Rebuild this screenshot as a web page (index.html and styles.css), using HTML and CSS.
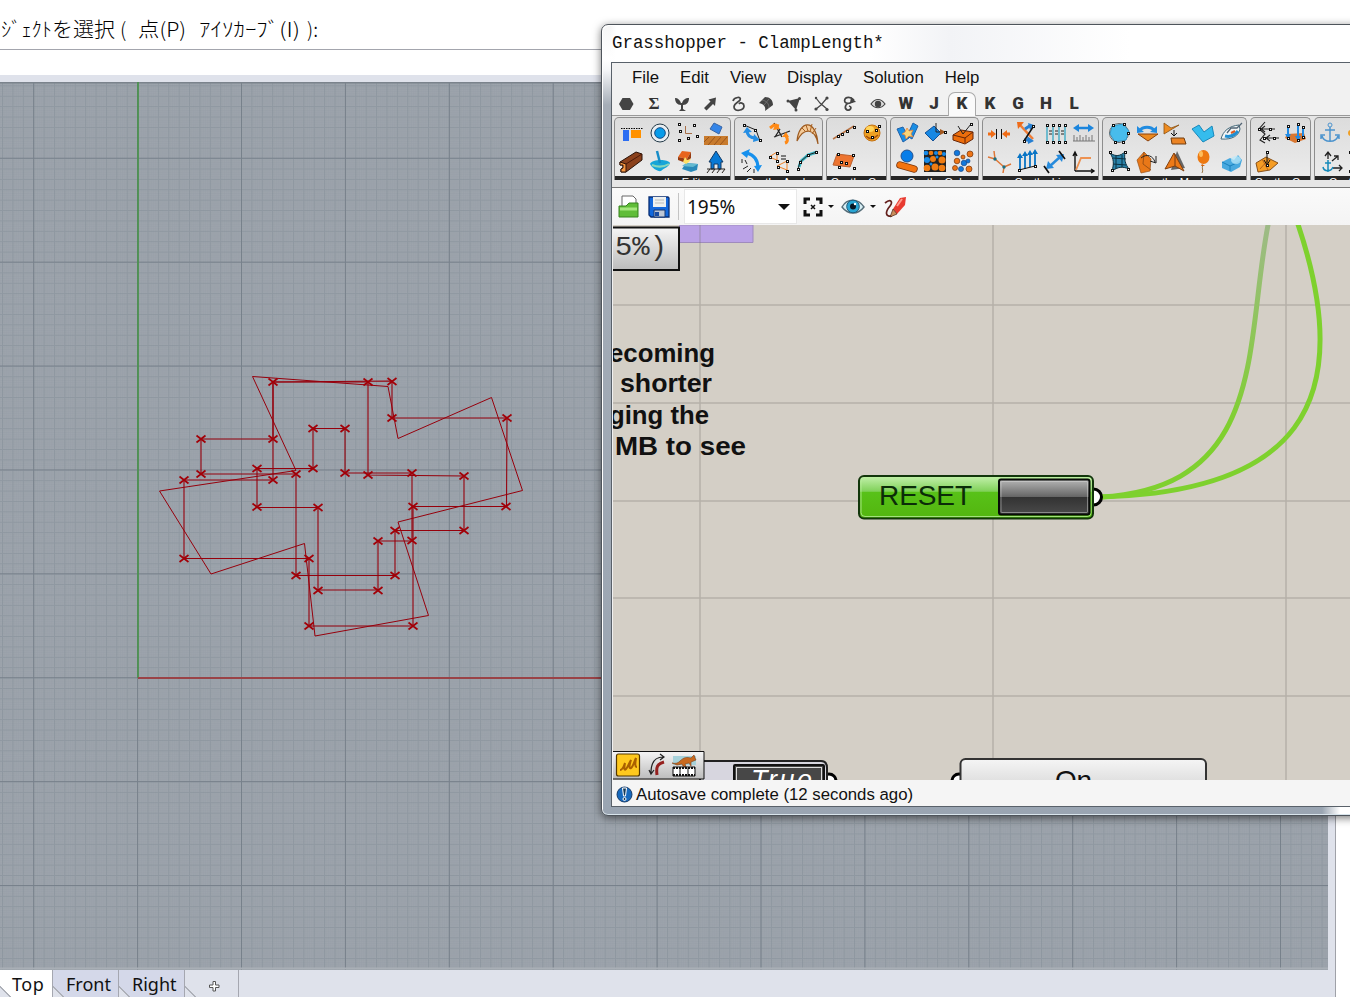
FILE: index.html
```html
<!DOCTYPE html>
<html lang="ja">
<head>
<meta charset="utf-8">
<title>Grasshopper - ClampLength</title>
<link rel="stylesheet" href="styles.css">
</head>
<body>
<div class="app">
  <header class="command">
    <svg width="340" height="49">
      <text x="1" y="37" textLength="51" lengthAdjust="spacingAndGlyphs">ｼﾞｪｸﾄ</text>
      <text x="52" y="37" textLength="63" lengthAdjust="spacingAndGlyphs">を選択</text>
      <text x="120" y="37">(</text>
      <text x="138" y="37" textLength="48" lengthAdjust="spacingAndGlyphs">点(P)</text>
      <text x="199" y="37" textLength="101" lengthAdjust="spacingAndGlyphs">ｱｲｿｶｰﾌﾞ(I)</text>
      <text x="307" y="37" textLength="11" lengthAdjust="spacingAndGlyphs">):</text>
    </svg>
  </header>
  <div class="workspace">
    <svg class="viewport" width="1328" height="888" viewBox="0 82 1328 888">
      <defs>
        <pattern id="fine" x="137.1" y="677.6" width="10.39" height="10.39" patternUnits="userSpaceOnUse">
          <path d="M2.1 0v10.4M4.2 0v10.4M6.2 0v10.4M8.3 0v10.4M0 2.1h10.4M0 4.2h10.4M0 6.2h10.4M0 8.3h10.4" stroke="#858f9a" stroke-width=".4" opacity=".35"/>
          <path d="M.5 0v10.4M0 .5h10.4" stroke="#7c8690" opacity=".42"/>
        </pattern>
        <pattern id="major" x="137.1" y="677.2" width="103.9" height="103.9" patternUnits="userSpaceOnUse">
          <path d="M.5 0v104M0 .5h104" stroke="#737c87" stroke-width="1" opacity=".85"/>
        </pattern>
        <path id="x" d="M-4.5-3.5L4.5 3.5M-4.5 3.5L4.5-3.5" stroke="#a20008" stroke-width="1.7"/>
      </defs>
      <rect y="82" width="1328" height="888" fill="#9da4ac"/>
      <rect y="82" width="1328" height="888" fill="url(#fine)"/>
      <rect y="82" width="1328" height="888" fill="url(#major)"/>
      <path d="M0 82.5H1328" stroke="#7b838c" stroke-width="2"/>
      <path d="M0 968.5H1328" stroke="#a9afb6" stroke-width="2"/>
      <path d="M138 82V678" stroke="#4c9150" stroke-width="1.8"/>
      <path d="M138 678H620" stroke="#9a4347" stroke-width="1.8"/>
      <g fill="none" stroke="#96000c" stroke-width="1.1">
        <path d="M273 382L392 381V418H507L506.500 506.500H413V626H309V558.500H184V480H273Z"/>
        <path d="M273 382H368V475L464 476V530.500H395V575.500H296V474H201V439H273Z"/>
        <path d="M313 428.500H345V473H412V541H378V590H318V507.500H257V468.500H313Z"/>
        <path stroke-width="1" d="M252.500 376.500L388 386.500L398 438.500L491.500 397.500L522.500 490.500L398 522L428.500 615.500L315 636L304.500 543.500L211 574L159.500 491L296 470.500Z"/>
      </g>
      <use href="#x" x="273" y="382"/><use href="#x" x="368" y="382"/><use href="#x" x="392" y="381.500"/><use href="#x" x="392" y="418"/><use href="#x" x="507" y="418"/>
      <use href="#x" x="201" y="439"/><use href="#x" x="273" y="439"/><use href="#x" x="313" y="428.500"/><use href="#x" x="345" y="428.500"/><use href="#x" x="257" y="468.500"/>
      <use href="#x" x="313" y="468.500"/><use href="#x" x="201" y="474"/><use href="#x" x="296" y="474"/><use href="#x" x="345" y="473"/><use href="#x" x="368" y="475"/>
      <use href="#x" x="412" y="473"/><use href="#x" x="464" y="476"/><use href="#x" x="184" y="480"/><use href="#x" x="273" y="480"/><use href="#x" x="257" y="507"/>
      <use href="#x" x="318" y="507.500"/><use href="#x" x="413" y="506.500"/><use href="#x" x="506" y="506.500"/><use href="#x" x="395" y="530.500"/><use href="#x" x="464" y="530.500"/>
      <use href="#x" x="378" y="541"/><use href="#x" x="412" y="540.500"/><use href="#x" x="184" y="558.500"/><use href="#x" x="309" y="558.500"/><use href="#x" x="296" y="575.500"/>
      <use href="#x" x="395" y="575.500"/><use href="#x" x="318" y="590.500"/><use href="#x" x="378" y="590.500"/><use href="#x" x="309" y="626"/><use href="#x" x="413" y="626"/>
    </svg>
    <nav class="views">
      <span class="view active">Top</span><span class="view front">Front</span><span class="view right">Right</span>
      <span class="view add"><svg width="11" height="11"><path d="M4 .5h2.500V4H10v2.500H6.500V10H4V6.500H.5V4H4z" fill="#fff" stroke="#555"/></svg></span>
    </nav>
  </div>

  <section class="window">
    <div class="title">Grasshopper - ClampLength*</div>
    <div class="client">
      <nav class="menu"><span>File</span><span>Edit</span><span>View</span><span>Display</span><span>Solution</span><span>Help</span></nav>
      <div class="tabs">
        <span class="tab"><svg viewBox="0 0 20 20"><path d="M6.500 4h7.500l3.500 6-3.500 6H6.500L3 10z"/></svg></span>
        <span class="tab serif">Σ</span>
        <span class="tab"><svg viewBox="0 0 20 20"><path d="M9 11C5 11 3 8 3 4c3 0 5 2 6 5h1c1-3 3-5 7-5 0 4-2 7-6 7v4l3 2H7l2-2z"/></svg></span>
        <span class="tab"><svg viewBox="0 0 20 20"><path d="M16 3.500L8.500 5.500l2 2L4 14l2.500 2.500L13 10l2 2z"/></svg></span>
        <span class="tab"><svg viewBox="0 0 20 20"><path class="ln" d="M5 7c1-4 9-5 7-1-1 2-6 3-6 7 0 5 10 4 10-1 0-3-4-4-5-2"/></svg></span>
        <span class="tab"><svg viewBox="0 0 20 20"><path d="M3 9l6-6c5 0 8 3 8 8l-8 6c1-4-1-7-6-8z"/><path d="M6 6c5 1 7 4 7 8M13 5l-5 6" stroke="#888" fill="none" stroke-width=".6"/></svg></span>
        <span class="tab"><svg viewBox="0 0 20 20"><path d="M4 7l12-3-4 12z"/><circle cx="4" cy="7" r="1.500"/><circle cx="15.500" cy="4.500" r="1.500"/><circle cx="12" cy="16" r="1.500"/></svg></span>
        <span class="tab"><svg viewBox="0 0 20 20"><path class="thin" d="M4 4l4 5 7 6M4 15l5-4 6-7"/><circle cx="4" cy="4" r="1.200"/><circle cx="15" cy="4" r="1.600"/><circle cx="4" cy="15" r="1.600"/><circle cx="15" cy="15.500" r="1.600"/></svg></span>
        <span class="tab"><svg viewBox="0 0 20 20"><path class="ln" d="M14 6C9 1 3 4 5 8c2 3 8 0 9-1M11 9c-6 0-7 5-4 7 3 1 6-3 2-4"/><path d="M11 3l5 5-6 1z"/></svg></span>
        <span class="tab"><svg viewBox="0 0 20 20"><path d="M3 10c4-6 10-6 14 0-4 5-10 5-14 0z" fill="#ddd" stroke="#444" stroke-width="1.200"/><circle cx="10" cy="10" r="3.200"/></svg></span>
        <span class="tab">W</span><span class="tab">J</span><span class="tab selected">K</span><span class="tab">K</span><span class="tab">G</span><span class="tab">H</span><span class="tab">L</span>
      </div>
      <div class="ribbon">
        <div class="group"><div class="icons four">
          <svg viewBox="0 0 28 28"><path d="M4 9.500h22" stroke="#000" stroke-dasharray="1.500 1"/><path d="M6 11h6v11H6z" fill="#2b6df2"/><path d="M14 11h10v8H14z" fill="#ff9100"/></svg>
          <svg viewBox="0 0 28 28"><circle cx="15" cy="14" r="9" fill="#e9eef2" stroke="#233947"/><circle cx="15" cy="14" r="5.300" fill="#079cea" stroke="#144d87"/></svg>
          <svg viewBox="0 0 28 28"><path d="M12.500 7v7.500H19" fill="none" stroke="#a86f48"/><path class="pt" d="M5 4h2v2H5zM20 5h2v2h-2zM6 11h2v2H6zM23 16h2v2h-2zM14 18h2v2h-2zM5 20h2v2H5z"/></svg>
          <svg viewBox="0 0 28 28"><path d="M3 17h24v9H3z" fill="#c87b2d"/><path d="M3 23l5-5m-1 8l7-8m-1 8l7-8m-1 8l7-8" stroke="#9b551a"/><path d="M13 4l8 4-3 7-9-5z" fill="#3485e8" stroke="#3965a5"/></svg>
          <svg viewBox="0 0 28 28"><path d="M3 15L19 5l6 2v6L9 25H4v-3l2-1v-3H3z" fill="#8b411c" stroke="#2a1208"/><path d="M3 15l6 2v8H4v-3l2-1v-3H3z" fill="#f59641" stroke="#301408"/><path d="M9 17L25 7" stroke="#4c1908"/></svg>
          <svg viewBox="0 0 28 28"><path d="M5 17c2-5 18-5 20-1-1 4-6 5-9 8-3 1-9-3-11-7z" fill="#16a5d8"/><path d="M7 18c5 2 12 2 17-1" fill="none" stroke="#88d6bb" stroke-width="2"/><path d="M12 4l3 12" stroke="#168cc8" stroke-width="2.500"/></svg>
          <svg viewBox="0 0 28 28"><path d="M5 10l4-6 9 1-4 7z" fill="#e8641d"/><path d="M5 10l9 2 4-7v6l-5 5-8-3z" fill="#963a10"/><path d="M13 16l12 1-1 6-6 2-9-3z" fill="#2989b9"/><path d="M13 16l12 1-5 3-11-1z" fill="#64bad1"/><path d="M12 10l2 3 4-1-2 3-3 2-3-2z" fill="#ffe067"/></svg>
          <svg viewBox="0 0 28 28"><path d="M15 4l7 11h-2v7h-3v-5h-4v5h-3v-7H8z" fill="#0879d5" stroke="#133963"/><path d="M6 22h18M9 22l-3 4M14 22l-3 4M19 22l-3 4M24 22l-3 4" stroke="#29231e"/></svg>
        </div><b>Castle_Edit</b></div>
        <div class="group"><div class="icons three">
          <svg viewBox="0 0 28 28"><path d="M7 6l12 5 4 11" fill="none" stroke="#222"/><path d="M10 11c0 6 4 8 9 8" stroke="#258ee4" stroke-width="3" fill="none"/><path d="M6 14l4-6 5 5zM16 23l1-8 6 6z" fill="#258ee4"/><path class="pt" d="M6 5h2v2H6zM17 10h2v2h-2zM22 20h2v2h-2z"/></svg>
          <svg viewBox="0 0 28 28"><path d="M9 4l8 14M9 18l16-6M10 18l5-8" stroke="#222" fill="none" stroke-width="1.300"/><path d="M5 9l4-3 5 1M20 24c3-1 3-4 1-7" stroke="#ff8a16" stroke-width="3" fill="none"/><path d="M11 4l4 6-7 1zM17 18h7l-3-5z" fill="#ff8a16"/></svg>
          <svg viewBox="0 0 28 28"><path d="M4 22C6 1 23-1 25 25 22 9 11 8 4 22z" fill="#f4cb9a" stroke="#9c5a20" stroke-width="1.200"/><path d="M9 9l4 4m0-7l2 6m4-7l-2 8m6-4l-4 6" stroke="#aa6120"/></svg>
          <svg viewBox="0 0 28 28"><path d="M10 6c7 2 11 7 11 15" fill="none" stroke="#1690ed" stroke-width="3"/><path d="M4 6l9-4-3 9zM17 19l8-1-4 7z" fill="#1690ed"/><path d="M5 12v4m3-3l2 4m-4 5l5-3m-1 6l4-4m3 5v-4" stroke="#222"/></svg>
          <svg viewBox="0 0 28 28"><path d="M4 10l8-5v8zM12 19l10-5v9z" fill="none" stroke="#f08126"/><path d="M16 9h5m-5 3h5" stroke="#111"/><path class="pt" d="M4 9h2v2H4zM11 5h2v2h-2zM11 13h2v2h-2zM12 19h2v2h-2zM21 13h2v2h-2zM21 23h2v2h-2z"/></svg>
          <svg viewBox="0 0 28 28"><path d="M6 20L8 14 15 8l9-3" stroke="#3ab9c9" stroke-width="3" fill="none"/><path d="M5 22L7 15 15 8l9-3" stroke="#222" fill="none"/><path class="pt" d="M4 21h2v2H4zM6 14h2v2H6zM14 7h2v2h-2zM22 4h2v2h-2z"/></svg>
        </div><b>Castle_Angle</b></div>
        <div class="group"><div class="icons two">
          <svg viewBox="0 0 28 28"><path d="M4 20L25 7" stroke="#b77345" stroke-width="1.500"/><path class="pt" d="M8 16h2v2H8zM12 14h2v2h-2zM17 11h2v2h-2zM24 7h2v2h-2z"/></svg>
          <svg viewBox="0 0 28 28"><circle cx="15" cy="14" r="8" fill="#eea123" stroke="#c47112"/><ellipse cx="13" cy="10" rx="4" ry="3" fill="#ffd45a"/><path d="M9 17c4 4 8 3 12-1" fill="none" stroke="#a84f0b" stroke-width="1.500"/><path class="pt" d="M9 11h2v2H9zM18 10h2v2h-2zM14 17h2v2h-2zM21 6h2v2h-2z"/></svg>
          <svg viewBox="0 0 28 28"><path d="M8 7l17 2-4 11-17-2z" fill="#ed7430" stroke="#bb602e"/><path class="pt" d="M8 6h2v2H8zM23 7h2v2h-2zM11 14h2v2h-2zM16 15h2v2h-2zM9 19h2v2H9zM24 20h2v2h-2z"/></svg>
        </div><b>Castle_Cn</b></div>
        <div class="group"><div class="icons three">
          <svg viewBox="0 0 28 28"><path d="M4 10l6-2 6 11-6 4zM20 4l5 3-6 13-5-3z" fill="#198ee5" stroke="#2262a9"/><path d="M14 9l2 3 4-1-2 4 2 3-4-1-3 3-1-4-3-1 3-2z" fill="#f8d579" stroke="#ef7d29" stroke-width=".7"/></svg>
          <svg viewBox="0 0 28 28"><path d="M4 14l9-7 7 7-8 8z" fill="#1688e4" stroke="#125198"/><path d="M15 13V4m0 9h9" stroke="#222"/><path d="M19 10l6 3-6 3z" fill="#a2581f"/><path class="pt" d="M23 12h2v2h-2z"/></svg>
          <svg viewBox="0 0 28 28"><path d="M4 16l8-5 12 2v7l-8 5-12-4z" fill="#ed6e0c" stroke="#672507"/><path d="M4 16l12 3 8-6M16 19v5" fill="none" stroke="#672507"/><path d="M14 15L9 7m5 8l8-10" stroke="#222"/><path class="pt" d="M21 4h2v2h-2z"/></svg>
          <svg viewBox="0 0 28 28"><circle cx="14" cy="9" r="6" fill="#087de8" stroke="#25518e"/><path d="M7 18l14 4" stroke="#7a350b" stroke-width="7.500" stroke-linecap="round"/><path d="M7 18l14 4" stroke="#f4740f" stroke-width="5.800" stroke-linecap="round"/></svg>
          <svg viewBox="0 0 28 28"><path d="M3 3h22v22H3z" fill="#222"/><g fill="#ef7c12"><circle cx="10" cy="6" r="2.300"/><circle cx="19" cy="6" r="2.300"/><circle cx="12" cy="12" r="3"/><circle cx="21" cy="13" r="3.500"/><circle cx="6" cy="21" r="3.300"/><circle cx="14" cy="20" r="3.500"/><circle cx="21" cy="21" r="3.300"/></g><g fill="#168ae7"><circle cx="5" cy="6" r="2.300"/><circle cx="15" cy="6" r="2"/><circle cx="6" cy="13" r="3"/><circle cx="23" cy="7" r="2"/><circle cx="16" cy="10" r="1.500"/><circle cx="10" cy="17" r="1.500"/></g></svg>
          <svg viewBox="0 0 28 28"><g fill="#ee7516" stroke="#73340b" stroke-width=".7"><circle cx="21" cy="7" r="3"/><circle cx="8" cy="14" r="2.800"/><circle cx="6" cy="21" r="2.500"/><circle cx="14" cy="10" r="2"/><circle cx="20" cy="22" r="3"/></g><g fill="#1278dc" stroke="#194786" stroke-width=".7"><circle cx="8" cy="6" r="2.800"/><circle cx="15" cy="16" r="2.800"/><circle cx="12" cy="22" r="2.500"/><circle cx="19" cy="14" r="2"/></g></svg>
        </div><b>Castle_Ool</b></div>
        <div class="group"><div class="icons four">
          <svg viewBox="0 0 28 28"><path d="M3 15h5m17 0h-5" stroke="#f06c16" stroke-width="3"/><path d="M6 11l5 4-5 4zM22 11l-5 4 5 4z" fill="#f06c16"/><path d="M11.500 10v10m5-10v10" stroke="#111"/></svg>
          <svg viewBox="0 0 28 28"><path d="M7 6l13 14" stroke="#ef7c35" stroke-width="2.500"/><path d="M4 3h7l-6 7z" fill="#ef6b19"/><path d="M12 10l6-4M11 21h6" stroke="#267fd2" stroke-width="3"/><path d="M15 4l6 2-4 5zM14 17l7 5-6 3z" fill="#267fd2"/><path d="M20 8l-9 14" stroke="#111" stroke-width="1.500"/><path class="pt" d="M19 6h2v2h-2zM10 21h2v2h-2z"/></svg>
          <svg viewBox="0 0 28 28"><path d="M6 6v17m6-17v17m6-17v17m6-17v17" stroke="#32a7c5" stroke-width="1.300"/><path d="M8 12h3m-3 3h3m3-3h3m-3 3h3m3-3h3m-3 3h3" stroke="#222"/><path class="pt" d="M5 5h2v2H5zM11 5h2v2h-2zM17 5h2v2h-2zM23 5h2v2h-2zM5 22h2v2H5zM11 22h2v2h-2zM17 22h2v2h-2zM23 22h2v2h-2z"/></svg>
          <svg viewBox="0 0 28 28"><path d="M7 9h15" stroke="#1b85dd" stroke-width="2.500"/><path d="M4 9l6-4v8zM25 9l-6-4v8z" fill="#1b85dd"/><path d="M4 22h22M5 22v-6m3 6v-4m3 4v-6m3 6v-4m3 4v-6m3 6v-4m3 4v-6" stroke="#777"/></svg>
          <svg viewBox="0 0 28 28"><path d="M3 10l7 2-1-8m1 8l9 8-1 6m1-6l7-3" fill="none" stroke="#df7737" stroke-width="1.500"/><circle cx="10" cy="12" r="1.700" fill="#1c7082"/><circle cx="19" cy="20" r="1.700" fill="#1c7082"/></svg>
          <svg viewBox="0 0 28 28"><path d="M7 23V10m5 12V8m5 12V7m5 12V6" stroke="#0874c5" stroke-width="1.800"/><path d="M4 11l3-5 3 5zm5-2l3-5 3 5zm5-1l3-5 3 5zm5-1l3-5 3 5z" fill="#0874c5"/><path d="M6 23l16-4" stroke="#111"/><path class="pt" d="M5 22h2v2H5zM21 18h2v2h-2z"/></svg>
          <svg viewBox="0 0 28 28"><path d="M9 19l10-9" stroke="#278bdc" stroke-width="2.500"/><path d="M7 14l6 7-8 1zM15 8l8-1-2 8z" fill="#278bdc"/><path d="M3 19l5 7M18 4l6 8" stroke="#111" stroke-width="1.700"/></svg>
          <svg viewBox="0 0 28 28"><path d="M6 24V6m-2 3l2-4 2 4M6 24h19m-3-2l3 2-3 2" fill="none" stroke="#111" stroke-width="1.400"/><path d="M7 23l5-12h10" stroke="#ed9252" fill="none" stroke-width="1.800"/></svg>
        </div><b>Castle_Lin</b></div>
        <div class="group"><div class="icons five">
          <svg viewBox="0 0 28 28"><circle cx="14" cy="14" r="9.500" fill="none" stroke="#666"/><path d="M7 7l11-2 6 7-3 9-11 2-5-8z" fill="#48bcec" stroke="#3694c0"/><path class="pt" d="M7 5h2v2H7zM18 4h2v2h-2zM22 13h2v2h-2zM9 22h2v2H9zM17 22h2v2h-2z"/></svg>
          <svg viewBox="0 0 28 28"><path d="M5 15h20l-10 7z" fill="#ec8b20" stroke="#8b400b"/><path d="M6 12c4-5 12-5 16 0" fill="none" stroke="#208be0" stroke-width="3"/><path d="M4 7v7l7-1zM24 7v7l-7-1z" fill="#208be0"/></svg>
          <svg viewBox="0 0 28 28"><path d="M3 4l7 5 8-3-15 9z" fill="#ed8b20" stroke="#8a5012" stroke-width=".8"/><path d="M13 11v6m-3-3l3 3 3-3" stroke="#111" fill="none"/><path d="M10 19h13l2 6H11z" fill="#ec8424" stroke="#713e12"/></svg>
          <svg viewBox="0 0 28 28"><path d="M3 10l7-4 5 7 8-6 2 10-11 6z" fill="#35bced" stroke="#1988bb"/></svg>
          <svg viewBox="0 0 28 28"><path d="M4 20C6 12 12 7 22 6l1 4c-1 6-7 11-19 10z" fill="#f3f6f6" stroke="#446a7b"/><path d="M8 17c4 1 9 0 13-5" stroke="#208fd2" stroke-width="3" fill="none"/><path d="M10 14l4-5h6l5-5" fill="none" stroke="#536575" stroke-width="1.300"/><path d="M14 14l4-2" stroke="#df5b20" stroke-width="2"/></svg>
          <svg viewBox="0 0 28 28"><path d="M5 6c6 4 10 3 15-1-1 7 0 12 4 17-7-3-11-2-17 2 2-7 2-12-2-18z" fill="#2b83aa" stroke="#0b3041"/><path d="M8 11l13 1m-13 5l13 1M11 9v13m6-14v12" stroke="#0b3041"/><path class="pt" d="M4 4h2v2H4zM19 4h2v2h-2zM6 22h2v2H6zM22 21h2v2h-2z"/></svg>
          <svg viewBox="0 0 28 28"><path d="M11 5l7 7-1 12-9 2-4-13z" fill="#e97818" stroke="#985119" stroke-width=".7"/><path d="M11 5l-1 12 8 6" stroke="#9f5214" fill="none"/><path d="M8 11c6-5 12-2 14 4m1-6v7l-6-2" fill="none" stroke="#222"/></svg>
          <svg viewBox="0 0 28 28"><path d="M16 4l8 17-14 2z" fill="#666"/><path d="M13 6L4 22l10-3 9 5z" fill="#ed7a18" stroke="#804010"/><path d="M14 19V7" stroke="#743b12"/></svg>
          <svg viewBox="0 0 28 28"><path d="M14 18c-2 3 1 5-1 8" stroke="#997546" fill="none"/><ellipse cx="14.500" cy="10" rx="6" ry="7" fill="#ed7911"/><path d="M13 17l-1 2h4z" fill="#d46108"/><ellipse cx="12" cy="7" rx="2" ry="3" fill="#ffbd5a"/></svg>
          <svg viewBox="0 0 28 28"><path d="M5 15l8-4 4 2 4-5 4 5-2 7-9 5-9-4z" fill="#48a9df"/><path d="M5 15l8 4 11-5M13 19v5" stroke="#1680bd" fill="none"/><ellipse cx="19" cy="13" rx="5" ry="4" fill="#bce9fa" opacity=".75"/></svg>
        </div><b>Castle_Mesh</b></div>
        <div class="group"><div class="icons two">
          <svg viewBox="0 0 28 28"><path d="M12 3l-6 7 6 5-5 6 5 3M6 10h16M11 19h15M12 7l-4 3 4 3m5 3l-4 3 4 3" fill="none" stroke="#222" stroke-width="1.100"/><path class="pt" d="M5 9h2v2H5zM16 9h2v2h-2zM10 18h2v2h-2zM20 18h2v2h-2z"/></svg>
          <svg viewBox="0 0 28 28"><path d="M6 15l17-1 2 6-11 4-10-5z" fill="#d97731"/><path d="M7 8v11M17 6v15M22 10v8" stroke="#218be5" stroke-width="2"/><path d="M4 15l3 5 3-5zm10 2l3 5 3-5z" fill="#218be5"/><path class="pt" d="M6 6h2v2H6zM16 4h2v2h-2zM21 7h2v2h-2zM6 18h2v2H6zM16 20h2v2h-2zM21 17h2v2h-2z"/></svg>
          <svg viewBox="0 0 28 28"><path d="M3 16l10-6 12 6-8 7-12 2z" fill="#f59d25" stroke="#87501a"/><path d="M9 12l6 11m1-11l-9 10" stroke="#b7631c"/><path d="M14 5v12m-3-4l3 5 3-5" stroke="#111" fill="none"/><path class="pt" d="M13 4h2v2h-2zM13 17h2v2h-2z"/></svg>
        </div><b>Castle_Cn</b></div>
        <div class="group"><div class="icons two">
          <svg viewBox="0 0 28 28"><path d="M13 8v14M8 11h10M5 17c2 7 14 7 16 0M4 20v-4h4m14 4v-4h-4" fill="none" stroke="#4e94cd" stroke-width="1.500"/><circle cx="13" cy="6" r="2" fill="none" stroke="#4e94cd"/></svg>
          <svg viewBox="0 0 28 28"><circle cx="6" cy="14" r="3" fill="#ef9e22"/></svg>
          <svg viewBox="0 0 28 28"><path d="M11 6v6M8 9l3-4 3 4M15 14l6-5m-4 0h4v4M16 21h9m-3-3l3 3-3 3" fill="none" stroke="#222" stroke-width="1.300"/><path d="M11 13v12m-5-5c1 5 8 5 10 0m-8-4h6" fill="none" stroke="#158aba" stroke-width="1.500"/></svg>
          <svg viewBox="0 0 28 28"><path class="pt" d="M4 4h2v2H4zM4 23h2v2H4z"/></svg>
        </div><b>Castle</b></div>
      </div>
      <div class="toolbar">
        <svg class="open" viewBox="0 0 24 26"><path d="M5 2h11l3 3v8H5z" fill="#fff" stroke="#666"/><path d="M2 12h7l3-3h9v14H2z" fill="#60bd38" stroke="#37831e"/><path d="M3 15h17" stroke="#a5e67d" stroke-width="3"/></svg>
        <svg class="save" viewBox="0 0 24 24"><path d="M2 2h19l1 1v19H4l-2-2z" fill="#1268dd" stroke="#092d72" stroke-width="1.300"/><path d="M6 2h13v10H6z" fill="#edf0ef"/><path d="M8 5h9M8 8h9" stroke="#bbb"/><path d="M7 15h11v7H7z" fill="#bec7d5" stroke="#193872"/><path d="M8 17h4v4H8z" fill="#194ca3"/></svg>
        <span class="sep"></span>
        <div class="zoom"><span>195%</span><i class="arrow"></i></div>
        <svg class="fit" viewBox="0 0 20 20"><path d="M2 7V2h5m6 0h5v5M2 13v5h5m6 0h5v-5" fill="none" stroke="#111" stroke-width="3"/><path d="M8 8l4 4m0-4l-4 4" stroke="#111" stroke-width="1.500"/></svg>
        <i class="arrow small"></i>
        <svg class="eye" viewBox="0 0 24 20"><path d="M1 10C6 1 17 1 23 10 17 18 7 18 1 10z" fill="#d8eff5" stroke="#556d78" stroke-width="1.400"/><circle cx="12" cy="9.500" r="6.300" fill="#29a5d3" stroke="#215c7c"/><circle cx="12" cy="9.500" r="3" fill="#071623"/><circle cx="14" cy="7" r="1.200" fill="#fff"/></svg>
        <i class="arrow small"></i>
        <svg class="pen" viewBox="0 0 24 24"><path d="M2 8c6-5 8-1 5 3-5 6-5 11 2 10" fill="none" stroke="#64201d" stroke-width="1.700"/><path d="M10 14L17 3l6-1-1 8-8 9z" fill="#e83a30"/><path d="M10 14l4 5-7 3z" fill="#c98d5a" stroke="#4b2219" stroke-width=".7"/><path d="M14 11l5-7" stroke="#ff9a8c" stroke-width="2"/></svg>
      </div>
      <svg class="canvas" width="737" height="555" viewBox="613 225 737 555">
        <defs>
          <linearGradient id="silver" x2="0" y2="1"><stop stop-color="#f5f5f5"/><stop offset="1" stop-color="#bcbcbc"/></linearGradient>
          <linearGradient id="green" x2="0" y2="1"><stop stop-color="#c5f1ae"/><stop offset=".36" stop-color="#80d159"/><stop offset=".38" stop-color="#58c218"/><stop offset="1" stop-color="#53b50f"/></linearGradient>
          <linearGradient id="dark" x2="0" y2="1"><stop stop-color="#b6b6b6"/><stop offset=".49" stop-color="#666"/><stop offset=".51" stop-color="#333"/><stop offset="1" stop-color="#4a4a4a"/></linearGradient>
          <linearGradient id="wire" gradientUnits="userSpaceOnUse" x1="0" y1="225" x2="0" y2="430"><stop stop-color="#9eba87"/><stop offset="1" stop-color="#7fd02f"/></linearGradient>
        </defs>
        <path d="M613 225h737v555H613z" fill="#d4cfc6"/>
        <path d="M679 225h74v17.500h-74" fill="#baa2e7" stroke="#9f8bbd"/>
        <path d="M700 225v555M993 225v555M1286 225v555M613 305h737M613 403h737M613 501h737M613 598h737M613 696h737" stroke="#77736d" stroke-opacity=".32" stroke-width="1.500"/>
        <path d="M610 227.500h69V270h-69" fill="url(#silver)" stroke="#111" stroke-width="2"/>
        <text class="mono" x="615" y="255" textLength="52" lengthAdjust="spacingAndGlyphs">5%)</text>
        <g class="note"><text x="609" y="362" textLength="106" lengthAdjust="spacingAndGlyphs">ecoming</text><text x="620" y="392" textLength="92" lengthAdjust="spacingAndGlyphs">shorter</text><text x="609" y="424" textLength="100" lengthAdjust="spacingAndGlyphs">ging the</text><text x="615" y="455" textLength="131" lengthAdjust="spacingAndGlyphs">MB to see</text></g>
        <path d="M1101 497C1270 487 1244 340 1269 220" fill="none" stroke="url(#wire)" stroke-width="5"/>
        <path d="M1101 497C1290 492 1362 410 1296.500 220" fill="none" stroke="#7ed12e" stroke-width="5"/>
        <circle cx="1093.500" cy="497" r="8" fill="#fff" stroke="#000" stroke-width="3"/>
        <rect x="859" y="476" width="234" height="42.500" rx="5" fill="url(#green)" stroke="#12360b" stroke-width="2"/>
        <rect x="861" y="478" width="230" height="38.500" rx="4" fill="none" stroke="#b7ee99" opacity=".8"/>
        <text class="reset" x="879" y="505" textLength="93">RESET</text>
        <rect x="999" y="479.500" width="90.500" height="35" rx="2" fill="url(#dark)" stroke="#080b08" stroke-width="2"/>
        <rect x="1001" y="481.500" width="86.500" height="31" rx="1" fill="none" stroke="#ddd" opacity=".45"/>
        <circle cx="829" cy="781" r="7" fill="#fff" stroke="#000" stroke-width="3"/>
        <path d="M700 761h121q6 0 6 7v14H700z" fill="#d7d6df" stroke="#222" stroke-width="2"/>
        <rect x="734" y="765" width="90" height="25" rx="1" fill="#474747" stroke="#111" stroke-width="2"/>
        <rect x="736.500" y="767.500" width="85" height="25" fill="none" stroke="#ddd"/>
        <text class="true" x="751" y="789" textLength="61">True</text>
        <circle cx="959" cy="781" r="7" fill="#fff" stroke="#000" stroke-width="3"/>
        <rect x="960.500" y="759" width="245.500" height="60" rx="5" fill="url(#silver)" stroke="#333" stroke-width="2"/>
        <text class="reset on" x="1055" y="790" textLength="37">On</text>
        <path d="M610 751.500h94V779h-94" fill="url(#silver)" stroke="#111"/>
        <rect x="616.500" y="754" width="23" height="22" rx="2" fill="#ffc91e" stroke="#553800" stroke-width="1.200"/>
        <path d="M620 770c2 0 4-4 5-7-1 5-1 8 1 6s3-6 5-9c-2 6-2 9 0 8s3-6 5-10c-1 6-1 9 1 9" fill="none" stroke="#aa6000" stroke-width="2"/>
        <path d="M651 773c0-10 3-16 12-16m-3-3l4 3-4 3m-11 10l2 4 3-4" fill="none" stroke="#222" stroke-width="1.200"/><path d="M657 775c-1-8 0-11 7-13" fill="none" stroke="#95201e" stroke-width="3"/>
        <path d="M673 756h23v9h-23z" fill="#a7d2da"/><path d="M672 763c4 1 6 0 8-2 4-4 7-4 11-3l3-3 1 3 1 2-5 2 0 4-2-3-4 1 1 3-3-1-1-2-5 1z" fill="#c86a20" stroke="#803d12" stroke-width=".6"/><path d="M673 767h22v9h-22z" fill="#fff" stroke="#111"/><path d="M673 768h22M673 775h22" stroke="#111" stroke-width="2.200" stroke-dasharray="2 1"/><path d="M680 768v8M688 768v8" stroke="#111"/>
      </svg>
      <div class="status"><svg width="17" height="17" viewBox="0 0 17 17"><circle cx="8.500" cy="8.500" r="7.500" fill="#1769bd" stroke="#173b67"/><path d="M6.500 2h4l-1 8h-2z" fill="#143958" stroke="#fff"/><circle cx="8.500" cy="13" r="1.500" fill="#143958" stroke="#fff"/></svg><span>Autosave complete (12 seconds ago)</span></div>
    </div>
  </section>
</div>
</body>
</html>
```
FILE: styles.css
```css
* { box-sizing: border-box; }
body { margin: 0; background: #fff; font-family: "Liberation Sans", sans-serif; overflow: hidden; }
.app { position: relative; width: 1350px; height: 997px; overflow: hidden; }
.command { height: 50px; border-bottom: 1px solid #a3a5ad; }
.command svg { display: block; }
.command text { font: 300 20px "Noto Sans CJK JP", sans-serif; fill: #000; }
.workspace { margin-top: 25px; padding-top: 7px; width: 1336px; height: 922px; background: #dfe2eb; border-right: 1px solid #9fa1a8; }
.viewport { display: block; }
.views { display: flex; height: 27px; font: 18px "Noto Sans", sans-serif; color: #111; }
.view { height: 27px; border-right: 1px solid #a5a7b0; background: linear-gradient(45deg, #dfe2eb 7px, #adb0b8 7px, #adb0b8 8px, #d4d8e9 8px); line-height: 29px; padding-left: 13px; white-space: nowrap; }
.view.active { width: 53px; padding-left: 12px; letter-spacing: .5px; background: linear-gradient(45deg, #dfe2eb 7px, #adb0b8 7px, #adb0b8 8px, #fff 8px); }
.view.front, .view.right { width: 66px; }
.view.add { width: 54px; padding: 11px 0 0 24px; line-height: 0; background: linear-gradient(45deg, #dfe2eb 7px, #adb0b8 7px, #adb0b8 8px, #dfe2eb 8px); }

.window { position: absolute; left: 601px; top: 24px; width: 760px; height: 792px; border: 1px solid #4e545b; border-radius: 7px; padding: 0 0 0 8px; background: linear-gradient(90deg, #fff0 720px, #fff 738px), linear-gradient(#f5f5f5, #fff 34px, #f5f6f8 45px, #a5adb7 80px, #9aa5b2); box-shadow: inset 1px 1px #fff, inset 0 -1px #d9e5ec, 0 2px 9px #0008; }
.title { height: 36px; padding: 6px 0 0 2px; font: 17.43px/22px "Liberation Mono", monospace; color: #111; white-space: pre; background: linear-gradient(90deg, #fff0, #fff 6px, #fff 260px, #f2f3f6 340px, #fff 520px); margin-top: 1px; }
.client { width: 751px; height: 745px; border: 1px solid #59616a; border-right: 0; background: #f1f1f1; overflow: hidden; margin-left: 1px; }
.menu { display: flex; gap: 21px; height: 29px; padding: 4px 0 0 20px; font-size: 16.8px; line-height: 21px; color: #111; }
.tabs { display: flex; height: 24px; border-bottom: 1px solid #999; }
.tab { width: 28px; height: 23px; text-align: center; font: 900 17px/23px "Roboto", sans-serif; color: #333; }
.tab.serif { font: bold 17px/23px "Liberation Serif", serif; }
.tab.selected { height: 24px; line-height: 20px; border: 1px solid #aaa; border-bottom: 0; border-radius: 7px 7px 0 0; background: #fafafa; }
.tab svg { width: 20px; height: 20px; margin-top: 2px; fill: #444; }
.tab .ln { fill: none; stroke: #444; stroke-width: 1.7; }
.tab .thin { fill: none; stroke: #444; stroke-width: 1.2; }
.ribbon { display: flex; gap: 3px; height: 72px; padding: 1px 0 0 2px; background: #e6e6e6; border-bottom: 1px solid #777; }
.group { flex: none; height: 63px; padding: 1px 1px 0 2px; border: 1px solid #8d8d8d; border-bottom: 0; border-radius: 5px 5px 0 0; background: linear-gradient(#dcdcdc, #ececec); overflow: hidden; }
.group b { display: block; margin: 1px -1px 0 -2px; height: 5px; background: #262626; color: #fff; font: 11px/13px "Liberation Sans", sans-serif; text-align: center; overflow: hidden; }
.icons { display: grid; grid-auto-rows: 28px; }
.icons svg { width: 28px; height: 28px; display: block; }
.two { grid-template-columns: repeat(2, 28px); }
.three { grid-template-columns: repeat(3, 28px); }
.four { grid-template-columns: repeat(4, 28px); }
.five { grid-template-columns: repeat(5, 28px); }
.pt { fill: #fff; stroke: #111; stroke-width: 1px; shape-rendering: crispEdges; }
.toolbar { display: flex; align-items: center; height: 37px; background: linear-gradient(#fafafa, #f4f4f4); }
.open { width: 24px; height: 26px; margin-left: 5px; }
.save { width: 24px; height: 24px; margin-left: 6px; }
.sep { width: 1px; height: 27px; background: #c4c4c4; margin-left: 7px; }
.zoom { display: flex; align-items: center; justify-content: space-between; width: 113px; height: 35px; margin-left: 5px; padding: 0 6px 0 2px; background: #fff; border: 1px solid #e8e8e8; font: 19px "Noto Sans", sans-serif; color: #111; }
.arrow { border: 6px solid transparent; border-top-color: #111; border-bottom: 0; }
.arrow.small { border-width: 3px 3px 0; margin: 0 7px 0 5px; }
.fit { width: 20px; height: 20px; margin-left: 6px; }
.eye { width: 24px; height: 20px; }
.pen { width: 24px; height: 24px; }
.canvas { display: block; margin-left: 1px; }
.mono { font: 27px "Liberation Mono", monospace; fill: #333; }
.note { font: bold 26px "Liberation Sans", sans-serif; fill: #111; }
.reset { font: 28px "Liberation Sans", sans-serif; fill: #0b2c08; }
.reset.on { fill: #111; }
.true { font: italic 27px "Liberation Sans", sans-serif; fill: #fff; }
.status { display: flex; align-items: center; gap: 3px; height: 27px; padding: 2px 0 0 4px; font-size: 16.8px; color: #111; background: #f5f5f5; white-space: nowrap; }
```
